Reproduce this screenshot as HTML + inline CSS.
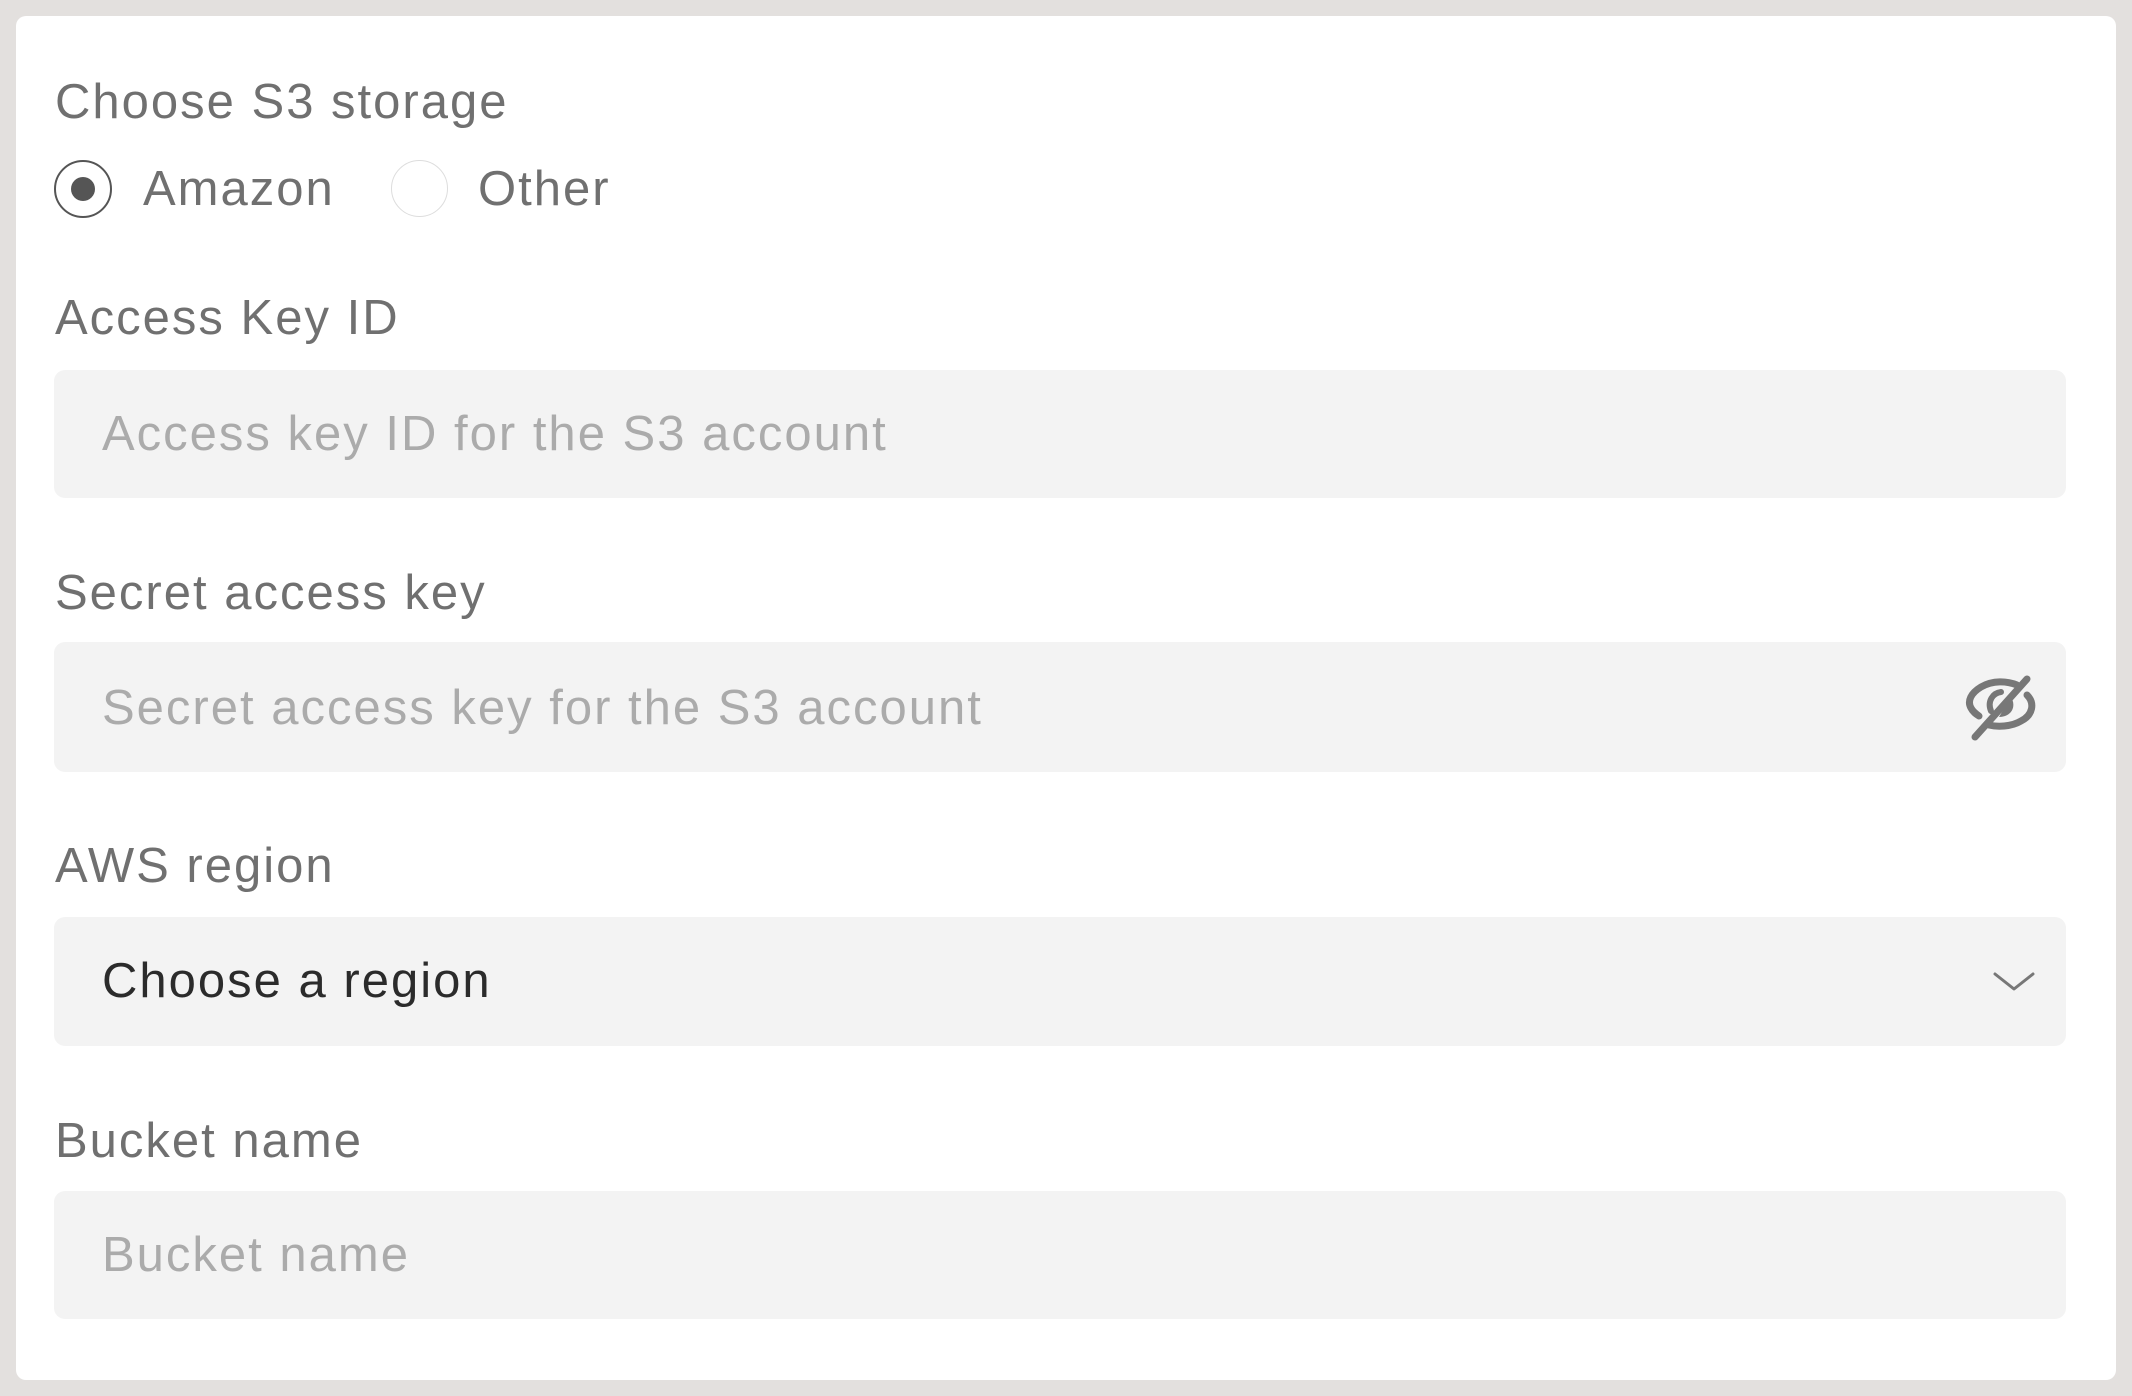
<!DOCTYPE html>
<html><head><meta charset="utf-8"><style>
*{margin:0;padding:0;box-sizing:border-box}
body{width:2132px;height:1396px;background:#e3e0de;position:relative;overflow:hidden;font-family:"Liberation Sans",Arial,sans-serif}
.panel{position:absolute;left:16px;top:16px;width:2100px;height:1364px;background:#fff;border-radius:10px}
.t{position:absolute;white-space:nowrap;font-size:49px;line-height:60px;color:#707070;letter-spacing:2px}
.box{position:absolute;left:54px;width:2012px;background:#f3f3f3;border-radius:11px}
.ph{color:#ababab}
</style></head><body>
<div class="panel"></div>
<div class="t" style="left:55px;top:72px">Choose S3 storage</div>
<div style="position:absolute;left:54px;top:160px;width:58px;height:58px;border:2px solid #555;border-radius:50%"></div>
<div style="position:absolute;left:71px;top:177px;width:24px;height:24px;background:#555;border-radius:50%"></div>
<div class="t" style="left:143px;top:159px">Amazon</div>
<div style="position:absolute;left:391px;top:160px;width:57px;height:57px;border:1.5px solid #ddd;border-radius:50%"></div>
<div class="t" style="left:478px;top:159px">Other</div>

<div class="t" style="left:55px;top:288px">Access Key ID</div>
<div class="box" style="top:370px;height:128px"></div>
<div class="t ph" style="left:102px;top:404px">Access key ID for the S3 account</div>

<div class="t" style="left:55px;top:563px">Secret access key</div>
<div class="box" style="top:642px;height:130px"></div>
<div class="t ph" style="left:102px;top:678px">Secret access key for the S3 account</div>
<svg style="position:absolute;left:1965px;top:675px" width="72" height="66" viewBox="0 0 72 66" fill="none" stroke="#777" stroke-width="7" stroke-linecap="round">
<path d="M52 10 C42 6 28 5 16 12 C6 18 2 26 6 33 C8 37 11 39 14 41"/>
<path d="M62 20 C70 28 68 40 56 46 C46 52 32 52 24 50"/>
<path d="M10 62 L62 4"/>
<path d="M26 36 C22 26 28 18 36 17" stroke-width="6"/>
<path d="M46 22 C52 32 46 42 34 42 Z" fill="#777" stroke="none"/>
</svg>

<div class="t" style="left:55px;top:836px">AWS region</div>
<div class="box" style="top:917px;height:129px"></div>
<div class="t" style="left:102px;top:951px;color:#2b2b2b">Choose a region</div>
<svg style="position:absolute;left:1992px;top:970px" width="44" height="24" viewBox="0 0 44 24" fill="none" stroke="#777" stroke-width="3" stroke-linecap="round" stroke-linejoin="round"><path d="M3 4 L22 19 L41 4"/></svg>

<div class="t" style="left:55px;top:1111px">Bucket name</div>
<div class="box" style="top:1191px;height:128px"></div>
<div class="t ph" style="left:102px;top:1225px">Bucket name</div>
</body></html>
